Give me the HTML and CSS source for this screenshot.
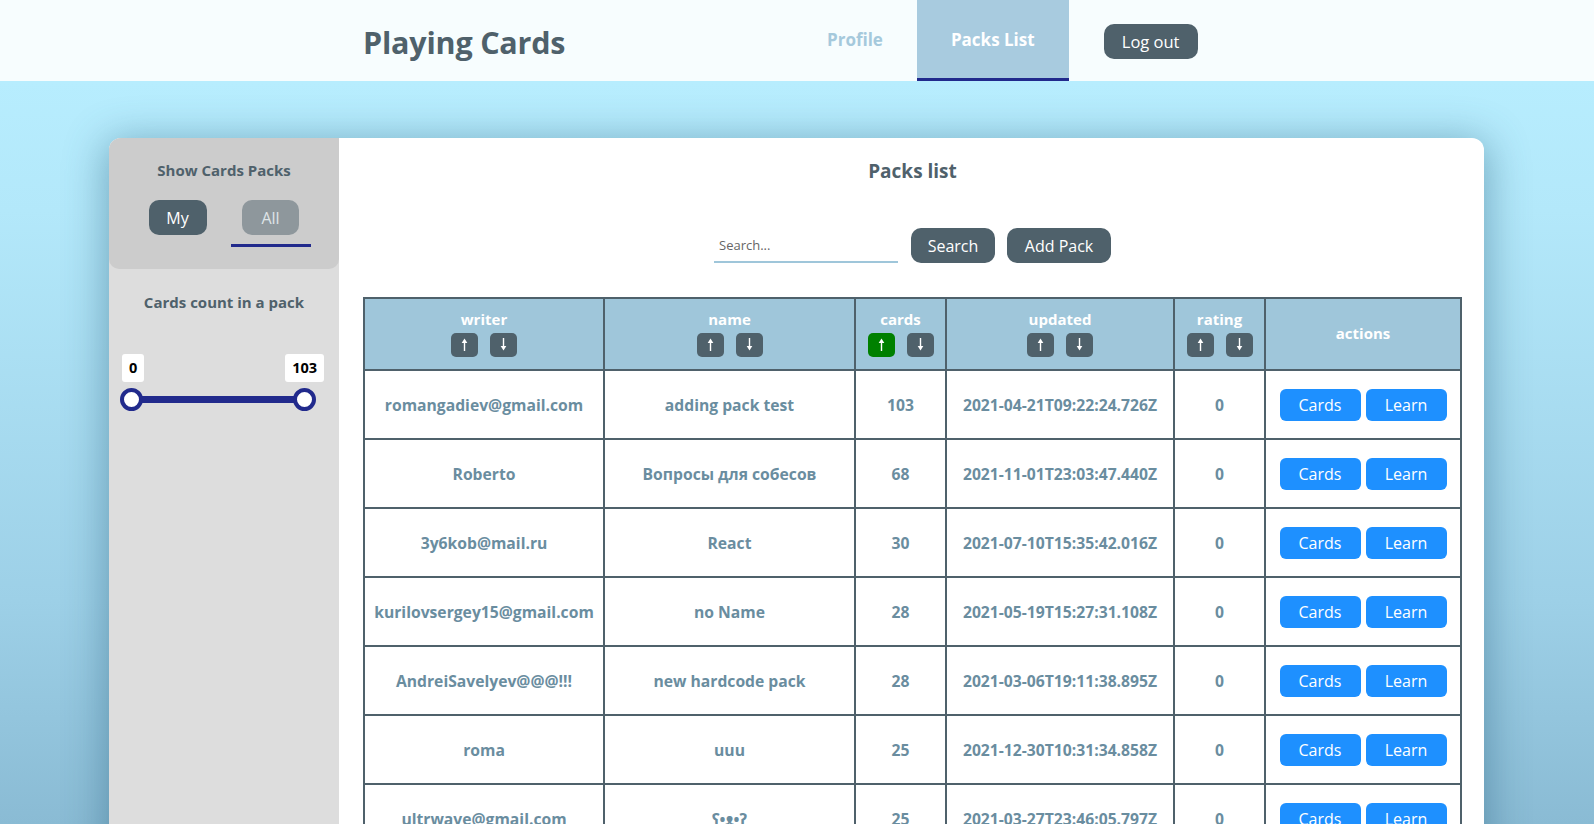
FILE: index.html
```html
<!DOCTYPE html>
<html lang="en">
<head>
<meta charset="utf-8">
<title>Playing Cards</title>
<link rel="stylesheet" href="styles.css">
</head>
<body>
<header class="topbar">
  <div class="topbar-inner">
    <div class="logo">Playing Cards</div>
    <nav class="nav">
      <a class="nav-link">Profile</a>
      <a class="nav-link active">Packs List</a>
    </nav>
    <button class="btn-dark logout">Log out</button>
  </div>
</header>
<main class="page">
  <div class="card">
    <aside class="sidebar">
      <div class="sidebar-top">
        <div class="side-title">Show Cards Packs</div>
        <div class="toggle">
          <div class="toggle-item"><button class="toggle-btn my">My</button></div>
          <div class="toggle-item active"><button class="toggle-btn all">All</button></div>
        </div>
      </div>
      <div class="side-title count-title">Cards count in a pack</div>
      <div class="range-values"><span class="range-val">0</span><span class="range-val">103</span></div>
      <div class="range-track"><span class="thumb"></span><span class="thumb"></span></div>
    </aside>
    <section class="content">
      <h2 class="content-title">Packs list</h2>
      <div class="toolbar">
        <input class="search" type="text" placeholder="Search...">
        <button class="btn-dark tool-btn btn-search">Search</button>
        <button class="btn-dark tool-btn btn-add">Add Pack</button>
      </div>
      <table class="packs">
        <colgroup>
          <col class="c-writer"><col class="c-name"><col class="c-cards"><col class="c-updated"><col class="c-rating"><col class="c-actions">
        </colgroup>
        <thead>
          <tr>
            <th><div class="th-label">writer</div><div class="sorts"><button class="sort"><svg width="7" height="13" viewBox="0 0 7 13"><polygon points="3.5,0.5 6.3,5 0.7,5" fill="#fff"/><rect x="2.8" y="4" width="1.4" height="9" fill="#fff"/></svg></button><button class="sort"><svg width="7" height="13" viewBox="0 0 7 13"><polygon points="3.5,12.5 6.3,8 0.7,8" fill="#fff"/><rect x="2.8" y="0" width="1.4" height="9" fill="#fff"/></svg></button></div></th>
            <th><div class="th-label">name</div><div class="sorts"><button class="sort"><svg width="7" height="13" viewBox="0 0 7 13"><polygon points="3.5,0.5 6.3,5 0.7,5" fill="#fff"/><rect x="2.8" y="4" width="1.4" height="9" fill="#fff"/></svg></button><button class="sort"><svg width="7" height="13" viewBox="0 0 7 13"><polygon points="3.5,12.5 6.3,8 0.7,8" fill="#fff"/><rect x="2.8" y="0" width="1.4" height="9" fill="#fff"/></svg></button></div></th>
            <th><div class="th-label">cards</div><div class="sorts"><button class="sort on"><svg width="7" height="13" viewBox="0 0 7 13"><polygon points="3.5,0.5 6.3,5 0.7,5" fill="#fff"/><rect x="2.8" y="4" width="1.4" height="9" fill="#fff"/></svg></button><button class="sort"><svg width="7" height="13" viewBox="0 0 7 13"><polygon points="3.5,12.5 6.3,8 0.7,8" fill="#fff"/><rect x="2.8" y="0" width="1.4" height="9" fill="#fff"/></svg></button></div></th>
            <th><div class="th-label">updated</div><div class="sorts"><button class="sort"><svg width="7" height="13" viewBox="0 0 7 13"><polygon points="3.5,0.5 6.3,5 0.7,5" fill="#fff"/><rect x="2.8" y="4" width="1.4" height="9" fill="#fff"/></svg></button><button class="sort"><svg width="7" height="13" viewBox="0 0 7 13"><polygon points="3.5,12.5 6.3,8 0.7,8" fill="#fff"/><rect x="2.8" y="0" width="1.4" height="9" fill="#fff"/></svg></button></div></th>
            <th><div class="th-label">rating</div><div class="sorts"><button class="sort"><svg width="7" height="13" viewBox="0 0 7 13"><polygon points="3.5,0.5 6.3,5 0.7,5" fill="#fff"/><rect x="2.8" y="4" width="1.4" height="9" fill="#fff"/></svg></button><button class="sort"><svg width="7" height="13" viewBox="0 0 7 13"><polygon points="3.5,12.5 6.3,8 0.7,8" fill="#fff"/><rect x="2.8" y="0" width="1.4" height="9" fill="#fff"/></svg></button></div></th>
            <th><div class="th-label">actions</div></th>
          </tr>
        </thead>
        <tbody>
          <tr><td>romangadiev@gmail.com</td><td>adding pack test</td><td>103</td><td>2021-04-21T09:22:24.726Z</td><td>0</td><td><div class="acts"><button class="btn-blue">Cards</button><button class="btn-blue">Learn</button></div></td></tr>
          <tr><td>Roberto</td><td>Вопросы для собесов</td><td>68</td><td>2021-11-01T23:03:47.440Z</td><td>0</td><td><div class="acts"><button class="btn-blue">Cards</button><button class="btn-blue">Learn</button></div></td></tr>
          <tr><td>3y6kob@mail.ru</td><td>React</td><td>30</td><td>2021-07-10T15:35:42.016Z</td><td>0</td><td><div class="acts"><button class="btn-blue">Cards</button><button class="btn-blue">Learn</button></div></td></tr>
          <tr><td>kurilovsergey15@gmail.com</td><td>no Name</td><td>28</td><td>2021-05-19T15:27:31.108Z</td><td>0</td><td><div class="acts"><button class="btn-blue">Cards</button><button class="btn-blue">Learn</button></div></td></tr>
          <tr><td>AndreiSavelyev@@@!!!</td><td>new hardcode pack</td><td>28</td><td>2021-03-06T19:11:38.895Z</td><td>0</td><td><div class="acts"><button class="btn-blue">Cards</button><button class="btn-blue">Learn</button></div></td></tr>
          <tr><td>roma</td><td>uuu</td><td>25</td><td>2021-12-30T10:31:34.858Z</td><td>0</td><td><div class="acts"><button class="btn-blue">Cards</button><button class="btn-blue">Learn</button></div></td></tr>
          <tr><td>ultrwave@gmail.com</td><td>ʕ•ᴥ•ʔ</td><td>25</td><td>2021-03-27T23:46:05.797Z</td><td>0</td><td><div class="acts"><button class="btn-blue">Cards</button><button class="btn-blue">Learn</button></div></td></tr>
          <tr><td>test@test.com</td><td>pack</td><td>24</td><td>2021-02-11T10:15:05.101Z</td><td>0</td><td><div class="acts"><button class="btn-blue">Cards</button><button class="btn-blue">Learn</button></div></td></tr>
        </tbody>
      </table>
    </section>
  </div>
</main>
</body>
</html>
```

FILE: styles.css
```css
html, body {
  margin: 0;
  padding: 0;
  height: 100%;
  overflow: hidden;
}
body {
  font-family: "Open Sans", "Noto Sans", "DejaVu Sans", sans-serif;
  color: #4f616b;
  background: #f7fdfe;
}
button {
  font-family: inherit;
  border: none;
  cursor: pointer;
  padding: 0;
}

/* ---------- top bar ---------- */
.topbar {
  background: #f7fdfe;
  height: 81px;
}
.topbar-inner {
  display: flex;
  align-items: center;
  height: 81px;
  padding-left: 363px;
}
.logo {
  flex: none;
  width: 430px;
  font-size: 30.5px;
  font-weight: 700;
  color: #4f616b;
  letter-spacing: -0.2px;
  padding-top: 2px;
}
.nav {
  display: flex;
  height: 81px;
}
.nav-link {
  display: flex;
  align-items: center;
  box-sizing: border-box;
  height: 81px;
  padding: 0 34px;
  border-bottom: 3px solid transparent;
  font-size: 17px;
  font-weight: 700;
  color: #a5c9dc;
  padding-top: 1px;
}
.nav-link.active {
  background: #a8cbdf;
  color: #ffffff;
  border-bottom-color: #212a8c;
}
.btn-dark {
  background: #4f616b;
  color: #ffffff;
  border-radius: 10px;
}
.logout {
  margin-left: 35px;
  width: 94px;
  height: 35px;
  font-size: 16.5px;
  margin-top: 1px;
}

/* ---------- page ---------- */
.page {
  height: calc(100% - 81px);
  box-sizing: border-box;
  padding: 57px 0 0 109px;
  background: linear-gradient(180deg, #b7edfe 0px, #b3e8fa 130px, #9dd0e7 520px, #8abbd4 743px, #82b2cb 1000px);
}
.card {
  display: flex;
  width: 1375px;
  height: 900px;
  background: #ffffff;
  border-radius: 12px;
  overflow: hidden;
  box-shadow: 0 6px 40px 4px rgba(40, 95, 125, 0.45);
}

/* ---------- sidebar ---------- */
.sidebar {
  flex: none;
  width: 230px;
  background: #dddddd;
}
.sidebar-top {
  height: 131px;
  box-sizing: border-box;
  background: #cccccc;
  border-radius: 0 0 10px 10px;
  padding-top: 22px;
}
.side-title {
  text-align: center;
  font-size: 15px;
  font-weight: 700;
  line-height: 20px;
  color: #4f616b;
}
.toggle {
  display: flex;
  justify-content: center;
  gap: 13px;
  margin-top: 20px;
}
.toggle-item {
  width: 80px;
  display: flex;
  justify-content: center;
  padding-bottom: 9px;
  border-bottom: 3px solid transparent;
}
.toggle-item.active {
  border-bottom-color: #212a8c;
}
.toggle-btn {
  height: 35px;
  border-radius: 10px;
  font-size: 16px;
}
.toggle-btn.my {
  width: 58px;
  background: #4f616b;
  color: #ffffff;
}
.toggle-btn.all {
  width: 57px;
  background: #8e979c;
  color: #dfe4e7;
}
.count-title {
  margin-top: 23px;
}
.range-values {
  display: flex;
  justify-content: space-between;
  margin: 42px 15px 0 13px;
}
.range-val {
  height: 28px;
  line-height: 28px;
  padding: 0 7px;
  min-width: 7px;
  text-align: center;
  background: #ffffff;
  border-radius: 3px;
  font-size: 14.5px;
  font-weight: 700;
  color: #000000;
}
.range-track {
  display: flex;
  justify-content: space-between;
  margin: 6px 23px 0 11px;
  height: 23px;
  background: linear-gradient(#212a8c, #212a8c) center / calc(100% - 22px) 7px no-repeat;
}
.thumb {
  width: 23px;
  height: 23px;
  box-sizing: border-box;
  border: 4px solid #212a8c;
  border-radius: 50%;
  background: #ffffff;
}

/* ---------- content ---------- */
.content {
  flex: 1;
  padding: 0 24px;
}
.content-title {
  margin: 0;
  padding-top: 20px;
  text-align: center;
  font-size: 19px;
  line-height: 26px;
  font-weight: 700;
  color: #4f616b;
}
.toolbar {
  display: flex;
  justify-content: center;
  align-items: center;
  gap: 12px;
  margin-top: 44px;
}
.search {
  width: 184px;
  height: 34px;
  box-sizing: border-box;
  margin-right: 1px;
  border: none;
  border-bottom: 2px solid #9fc6da;
  background: transparent;
  padding: 0 5px;
  font-family: inherit;
  font-size: 13px;
  color: #333;
  outline: none;
}
.search::placeholder {
  color: #666;
}
.tool-btn {
  height: 35px;
  font-size: 16px;
}
.btn-search {
  width: 84px;
}
.btn-add {
  width: 104px;
}

/* ---------- table ---------- */
.packs {
  width: 1097px;
  margin-top: 34px;
  border-collapse: collapse;
  table-layout: fixed;
  border: 2px solid #4f616b;
}
.c-writer { width: 240px; }
.c-name { width: 251px; }
.c-cards { width: 91px; }
.c-updated { width: 228px; }
.c-rating { width: 91px; }
.c-actions { width: 196px; }
.packs th, .packs td {
  border: 2px solid #4f616b;
  text-align: center;
  padding: 0;
}
.packs thead tr {
  height: 72px;
}
.packs th {
  background: #9fc6da;
  color: #ffffff;
  font-size: 15px;
  font-weight: 700;
}
.th-label {
  line-height: 20px;
  margin-top: -3px;
}
.sorts {
  display: flex;
  justify-content: center;
  gap: 12px;
  margin-top: 4px;
}
.sort {
  width: 27px;
  height: 24px;
  border-radius: 5px;
  background: #4f616b;
  display: flex;
  align-items: center;
  justify-content: center;
}
.sort.on {
  background: #008000;
}
.packs tbody tr {
  height: 69px;
}
.packs td {
  font-size: 15.7px;
  font-weight: 700;
  color: #6a8d9f;
}
.acts {
  display: flex;
  justify-content: center;
  gap: 5px;
}
.btn-blue {
  width: 81px;
  height: 32px;
  border-radius: 6px;
  background: #1e90ff;
  color: #ffffff;
  font-size: 16px;
}
```
